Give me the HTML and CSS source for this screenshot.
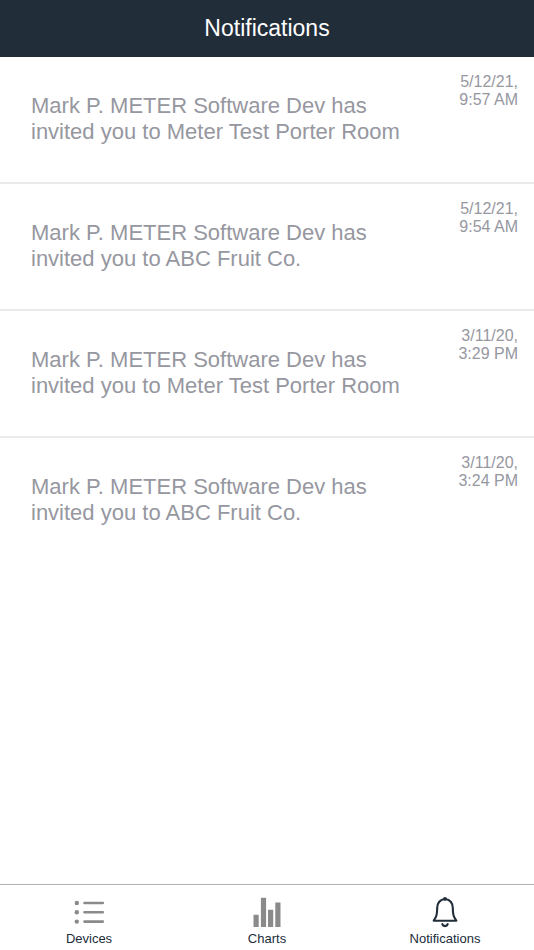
FILE: index.html
```html
<!DOCTYPE html>
<html lang="en">
<head>
<meta charset="utf-8">
<meta name="viewport" content="width=device-width, initial-scale=1">
<title>Notifications</title>
<link rel="stylesheet" href="styles.css">
</head>
<body>
<header class="header"><h1>Notifications</h1></header>
<main class="content">
  <ul class="list">
    <li class="item">
      <p class="message">Mark P. METER Software Dev has invited you to Meter Test Porter Room</p>
      <time class="time">5/12/21, 9:57 AM</time>
    </li>
    <li class="item">
      <p class="message">Mark P. METER Software Dev has invited you to ABC Fruit Co.</p>
      <time class="time">5/12/21, 9:54 AM</time>
    </li>
    <li class="item">
      <p class="message">Mark P. METER Software Dev has invited you to Meter Test Porter Room</p>
      <time class="time">3/11/20, 3:29 PM</time>
    </li>
    <li class="item">
      <p class="message">Mark P. METER Software Dev has invited you to ABC Fruit Co.</p>
      <time class="time">3/11/20, 3:24 PM</time>
    </li>
  </ul>
</main>
<nav class="tabs">
  <a class="tab" href="#devices">
    <svg class="icon" viewBox="0 0 32 32" aria-hidden="true">
      <g fill="#8a8a8a"><circle cx="3.8" cy="7" r="2.2"/><circle cx="3.8" cy="16.3" r="2.2"/><circle cx="3.8" cy="25.6" r="2.2"/></g>
      <path d="M11.5 7h18.3M11.5 16.3h18.3M11.5 25.6h18.3" fill="none" stroke="#8a8a8a" stroke-width="2.6" stroke-linecap="round"/>
    </svg>
    <span>Devices</span>
  </a>
  <a class="tab" href="#charts">
    <svg class="icon" viewBox="0 0 32 32" aria-hidden="true">
      <path fill="#8a8a8a" d="M2.5 18.7h5.2v12.3h-5.2zM9.9 1.7h5.2v29.3h-5.2zM17 13.7h5.2v17.3h-5.2zM24.3 6.5h5.2v24.5h-5.2z"/>
    </svg>
    <span>Charts</span>
  </a>
  <a class="tab" href="#notifications" aria-current="page">
    <svg class="icon" viewBox="0 0 32 32" aria-hidden="true">
      <path fill="none" stroke="#222d3a" stroke-width="2.1" stroke-linejoin="round" stroke-linecap="round" d="M16 3C11 3.600 8.300 7.300 8.200 12 8.100 18.500 7.600 20.500 4.700 24.700H27.300C24.400 20.500 23.900 18.500 23.800 12 23.700 7.300 21 3.600 16 3z"/>
      <circle cx="16" cy="2.800" r="1.900" fill="#222d3a"/>
      <path fill="none" stroke="#222d3a" stroke-width="2.200" stroke-linecap="round" d="M13.300 28.200c.9 2.500 4.500 2.500 5.400 0"/>
    </svg>
    <span>Notifications</span>
  </a>
</nav>
</body>
</html>
```
FILE: styles.css
```css
* { box-sizing: border-box; }
body {
  margin: 0;
  min-height: 100vh;
  display: flex;
  flex-direction: column;
  background: #fff;
  font-family: "Liberation Sans", Arial, sans-serif;
}
.header {
  background: #222d3a;
  color: #fff;
  padding: 14px 16px 15px;
  text-align: center;
}
.header h1 { margin: 0; font-size: 23px; line-height: 28px; font-weight: 400; }
.content { flex: 1; }
.list { list-style: none; margin: 0; padding: 0; }
.item {
  display: flex;
  justify-content: space-between;
  gap: 16px;
  padding: 16px 16px 37px 31px;
  border-bottom: 2px solid #ebebeb;
  color: #96979f;
}
.item:last-child { border-bottom: 0; }
.message { margin: 20px 0 0; max-width: 380px; font-size: 22px; line-height: 26px; }
.time { flex: none; width: 64px; text-align: right; font-size: 16px; line-height: 18px; }
.tabs { display: flex; border-top: 1px solid #b2b2b2; }
.tab {
  flex: 1;
  display: flex;
  flex-direction: column;
  align-items: center;
  gap: 3px;
  padding: 11px 0 4px;
  color: #222d3a;
  font-size: 13px;
  line-height: 15px;
  text-decoration: none;
}
.icon { width: 32px; height: 32px; }
```
